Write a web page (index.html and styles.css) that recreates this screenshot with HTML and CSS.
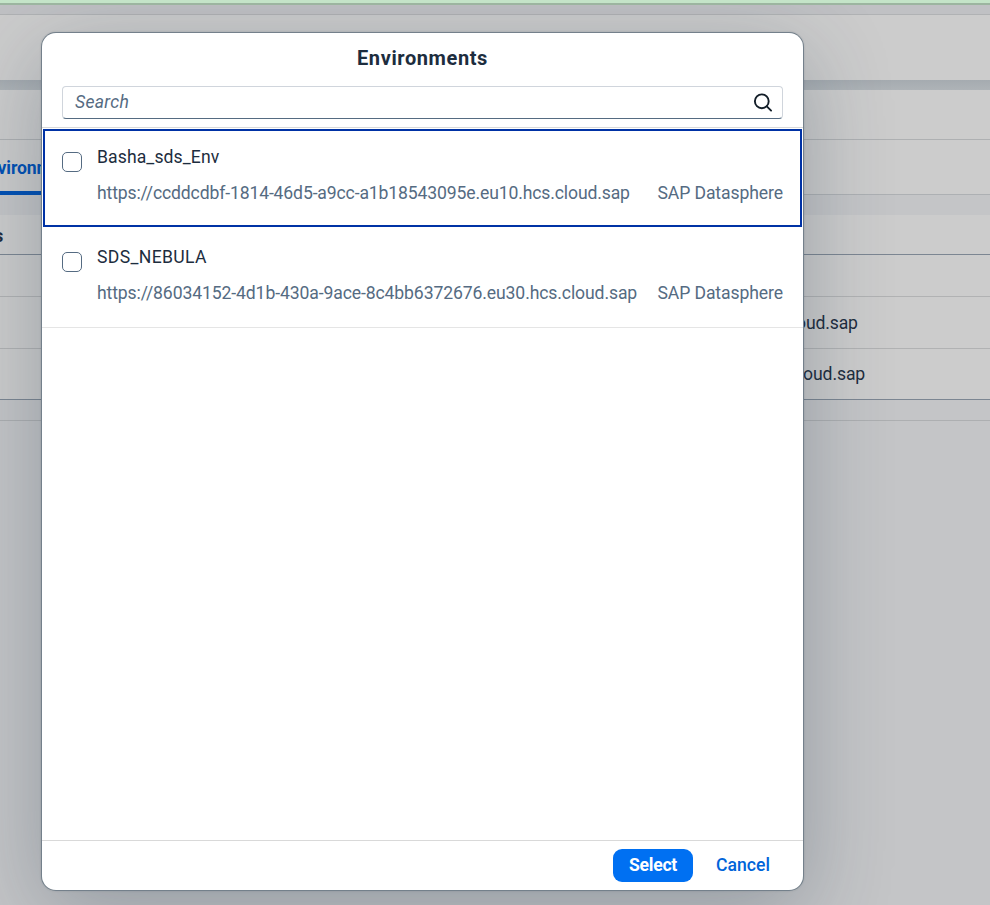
FILE: index.html
```html
<!DOCTYPE html>
<html lang="en">
<head>
<meta charset="utf-8">
<title>Environments</title>
<link rel="stylesheet" href="styles.css">
</head>
<body>
<div class="page">
  <div class="strip"></div>
  <div class="topbar"></div>
  <div class="band"></div>
  <div class="panel-head"></div>
  <div class="tabs"><span class="tab">Environments</span></div>
  <div class="gap"></div>
  <div class="table-title"><span>Environments</span></div>
  <div class="row row-head"></div>
  <div class="row"><span class="url url-a">https://ccddcdbf-1814-46d5-a9cc-a1b18543095e.eu10.hcs.cloud.sap</span></div>
  <div class="row row-last"><span class="url url-b">https://86034152-4d1b-430a-9ace-8c4bb6372676.eu30.hcs.cloud.sap</span></div>
  <div class="page-end"></div>
</div>
<div class="dialog" role="dialog">
  <header class="header">
    <h1 class="title"><span>Environments</span></h1>
    <div class="search">
      <span class="placeholder">Search</span>
      <svg class="icon" viewBox="0 0 20 20" width="20" height="20" fill="none" stroke="#131e29" stroke-width="1.9"><circle cx="8.8" cy="8.3" r="6.9"/><path d="M13.8 13.3L18.1 17.6" stroke-linecap="round"/></svg>
    </div>
  </header>
  <main class="list">
    <div class="item focused">
      <span class="check"></span>
      <div class="content">
        <div class="name"><span class="name-a">Basha_sds_Env</span></div>
        <div class="detail"><span class="url url-a">https://ccddcdbf-1814-46d5-a9cc-a1b18543095e.eu10.hcs.cloud.sap</span><span class="kind">SAP Datasphere</span></div>
      </div>
    </div>
    <div class="item">
      <span class="check"></span>
      <div class="content">
        <div class="name"><span class="name-b">SDS_NEBULA</span></div>
        <div class="detail"><span class="url url-b">https://86034152-4d1b-430a-9ace-8c4bb6372676.eu30.hcs.cloud.sap</span><span class="kind">SAP Datasphere</span></div>
      </div>
    </div>
  </main>
  <footer class="footer">
    <button class="btn primary">Select</button>
    <button class="btn">Cancel</button>
  </footer>
</div>
</body>
</html>
```
FILE: styles.css
```css
* { box-sizing: border-box; }
body {
  margin: 0;
  height: 905px;
  overflow: hidden;
  position: relative;
  font: 17.6px/20px Roboto, "Liberation Sans", sans-serif;
  color: #1d2d3e;
  background: #c4c5c7;
}
.page { height: 905px; display: flex; flex-direction: column; white-space: nowrap; overflow: hidden; }
.page > div { flex: none; }
.strip { height: 5px; background: #c4e4c8; border-bottom: 2px solid #9cb5a0; position: relative; z-index: 2; }
.topbar { height: 75px; border-top: 9px solid #c0c1c4; background: linear-gradient(#b0b2b4 1px, #cccccc 1px); }
.band { height: 10px; background: linear-gradient(#a5abb0, #aeb3b7); }
.panel-head { height: 50px; background: #cccccc; border-bottom: 1px solid #aeb0b2; }
.tabs { height: 55px; background: #cccccc; border-bottom: 1px solid #adb0b3; display: flex; }
.tab {
  margin-left: -22px;
  width: 112px;
  height: 55px;
  padding-top: 18px;
  border-bottom: 4px solid #0050b4;
  color: #0050b4;
  font-weight: 700;
  letter-spacing: -0.1px;
}
.gap { height: 20px; background: #c4c5c7; }
.table-title { height: 40px; background: #cccccc; border-bottom: 1px solid #7c8692; padding-top: 11px; font-weight: 700; display: flex; }
.table-title span { width: 108px; margin-left: -105.5px; text-align: right; }
.row { height: 52px; background: #cccccc; border-bottom: 1px solid #b1b2b3; padding: 16px 0 0 325px; }
.row-head { height: 42px; }
.row-last { height: 51px; border-color: #7c8692; padding-top: 15px; }
.page-end { height: 21px; border-bottom: 1px solid #adafb1; }
.url-a { letter-spacing: -0.14px; }
.url-b { letter-spacing: -0.115px; }

.dialog {
  position: absolute;
  left: 42px;
  top: 33px;
  width: 761px;
  height: 857px;
  display: flex;
  flex-direction: column;
  background: #fff;
  border-radius: 14px;
  box-shadow: 0 0 0 1px #74808b, 0 0 2px 1px rgba(34,53,72,.2), 0 22px 88px rgba(34,53,72,.3);
}
.header { height: 95px; padding: 13px 20px 0; border-bottom: 1px solid #d9d9d9; }
.title { margin: 0; text-align: center; font-size: 20px; line-height: 24px; font-weight: 700; letter-spacing: 0.6px; }
.search {
  margin-top: 16px;
  height: 33px;
  padding: 0 9px 0 12px;
  display: flex;
  align-items: center;
  justify-content: space-between;
  border: 1px solid #d0d5dc;
  border-bottom-color: #556b81;
  border-radius: 4px;
}
.placeholder { font-style: italic; color: #556b82; padding-bottom: 2px; letter-spacing: 0.3px; }
.list { flex: 1; }
.item { height: 100px; padding: 19px 20px 0; display: flex; border-bottom: 1px solid #e5e5e5; }
.focused { border-bottom: 0; outline: 2px solid #0032a5; outline-offset: -3px; }
.check { flex: none; width: 20px; height: 20px; margin: 5px 15px 0 0; border: 1px solid #556b82; border-radius: 5px; }
.content { flex: 1; white-space: nowrap; }
.name { height: 36px; }
.name-a { letter-spacing: 0.1px; }
.name-b { letter-spacing: 0.35px; }
.detail { display: flex; justify-content: space-between; color: #556b82; }
.kind { letter-spacing: -0.1px; }
.footer { height: 50px; border-top: 1px solid #d9d9d9; padding: 8px 17px 0 0; display: flex; justify-content: flex-end; gap: 7px; }
.btn {
  height: 33px;
  padding: 0;
  width: 86px;
  border: 0;
  border-radius: 9px;
  background: none;
  color: #0064d9;
  font: 500 17.6px/31px Roboto, sans-serif;
}
.primary { width: 80px; background: #0070f2; color: #fff; font-weight: 700; letter-spacing: -0.25px; }
```
